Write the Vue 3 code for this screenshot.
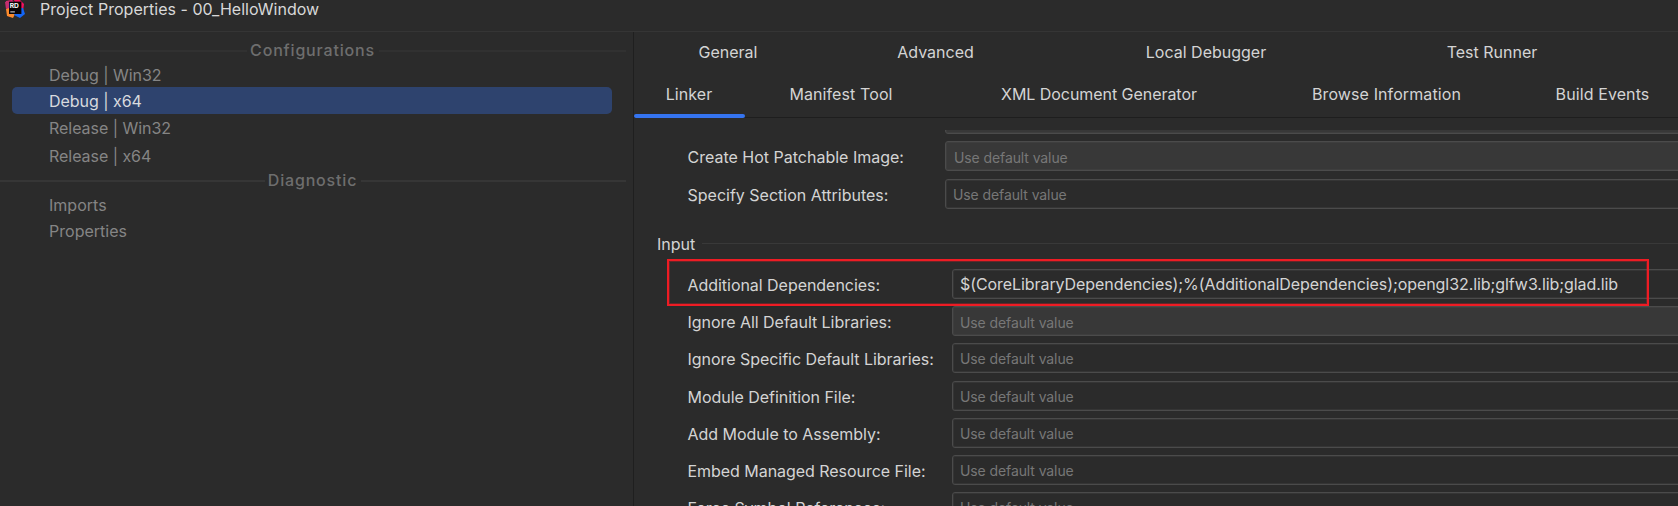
<script setup>
const configurations = [
  { name: 'Debug | Win32', cls: 'first' },
  { name: 'Debug | x64', cls: 'selected' },
  { name: 'Release | Win32', cls: '' },
  { name: 'Release | x64', cls: 'last' },
]
const diagnostics = ['Imports', 'Properties']
const upperTabs = [
  { name: 'General', width: 188 },
  { name: 'Advanced', width: 227 },
  { name: 'Local Debugger', width: 314 },
  { name: 'Test Runner', width: 258 },
]
const lowerTabs = [
  { name: 'Linker', width: 110, active: true },
  { name: 'Manifest Tool', width: 194 },
  { name: 'XML Document Generator', width: 322, tight: true },
  { name: 'Browse Information', width: 253 },
  { name: 'Build Events', width: 179 },
]
const hint = 'Use default value'
const general = [
  { label: '', text: '', combo: true },
  { label: 'Create Hot Patchable Image:', text: hint, combo: true },
  { label: 'Specify Section Attributes:', text: hint },
]
const input = [
  {
    label: 'Additional Dependencies:',
    text: '$(CoreLibraryDependencies);%(AdditionalDependencies);opengl32.lib;glfw3.lib;glad.lib',
    filled: true,
  },
  { label: 'Ignore All Default Libraries:', text: hint, combo: true },
  { label: 'Ignore Specific Default Libraries:', text: hint },
  { label: 'Module Definition File:', text: hint },
  { label: 'Add Module to Assembly:', text: hint },
  { label: 'Embed Managed Resource File:', text: hint },
  { label: 'Force Symbol References:', text: hint },
]
</script>

<template>
  <div class="window">
    <header class="titlebar">
      <svg class="logo" width="20" height="20" viewBox="0 0 20 20">
        <path d="M1 1 L7 0 L12 5 L8 17 L3 16 Z" fill="#f0287a" />
        <path d="M1 9 L6 7 L10 14 L8 18 L2 16 Z" fill="#fb8a2c" />
        <path d="M9 0 L15 0 L19 4 L18 11 L12 9 Z" fill="#f5125f" />
        <path d="M18 8 L20 14 L15 18 L9 15 L14 8 Z" fill="#1466f5" />
        <path d="M0 2 L4 1 L4 8 L1 9 Z" fill="#c22f6e" />
        <rect x="4" y="1.6" width="12.4" height="12.4" fill="#080408" />
        <text x="4.7" y="8.4" class="logo-text">RD</text>
        <rect x="5.3" y="11.4" width="4.6" height="1" fill="#ddd" />
      </svg>
      <span class="title">Project Properties - 00_HelloWindow</span>
    </header>
    <div class="body">
      <aside class="sidebar">
        <div class="section faint">Configurations</div>
        <ul class="list">
          <li v-for="c in configurations" :key="c.name" :class="c.cls">{{ c.name }}</li>
        </ul>
        <div class="section">Diagnostic</div>
        <ul class="list compact">
          <li v-for="d in diagnostics" :key="d">{{ d }}</li>
        </ul>
      </aside>
      <main class="content">
        <nav class="tabs">
          <div class="tab-row">
            <div v-for="t in upperTabs" :key="t.name" class="tab" :style="{ width: t.width + 'px' }">{{ t.name }}</div>
          </div>
          <div class="tab-row lower">
            <div v-for="t in lowerTabs" :key="t.name" class="tab" :class="{ active: t.active, tight: t.tight }" :style="{ width: t.width + 'px' }">{{ t.name }}</div>
          </div>
        </nav>
        <div class="scroll">
          <div class="rows general">
            <div v-for="r in general" :key="r.label" class="row">
              <label>{{ r.label }}</label>
              <div class="field" :class="{ combo: r.combo }">{{ r.text }}</div>
            </div>
          </div>
          <div class="group"><span>Input</span></div>
          <div class="rows">
            <div v-for="r in input" :key="r.label" class="row">
              <label>{{ r.label }}</label>
              <div class="field" :class="{ combo: r.combo, filled: r.filled }">{{ r.text }}</div>
            </div>
          </div>
        </div>
      </main>
    </div>
    <div class="marker"></div>
  </div>
</template>

<style>
body { background: #2b2b2b; }
</style>

<style scoped>
.window {
  position: relative;
  display: flex;
  flex-direction: column;
  width: 1678px;
  height: 506px;
  overflow: hidden;
  background: #2b2b2b;
  color: #d4d4d4;
  font: 16px/20px Inter, "Noto Sans", sans-serif;
  white-space: nowrap;
}
.titlebar {
  flex: none;
  box-sizing: border-box;
  height: 32px;
  display: flex;
  align-items: flex-start;
  border-bottom: 1px solid #353535;
}
.logo { flex: none; margin-left: 5px; }
.logo-text { font: 700 6.6px Inter, sans-serif; fill: #fff; }
.title { margin-left: 15px; line-height: 18px; letter-spacing: 0.03px; color: #d8d8d8; }
.body { flex: 1; min-height: 0; display: flex; }
.sidebar {
  box-sizing: border-box;
  flex: none;
  width: 634px;
  border-right: 1px solid #1f1f1f;
  padding: 7px 7px 0 0;
  color: #858585;
}
.section {
  display: flex;
  align-items: center;
  height: 22px;
  font-weight: 500;
  letter-spacing: 0.82px;
  color: #6e6e6e;
}
.section::before, .section::after {
  content: "";
  flex: 1;
  height: 2px;
  margin-top: 2px;
  background: #363636;
}
.section.faint::before, .section.faint::after { background: #313131; }
.section::before { margin-right: 3px; }
.section::after { margin-left: 4px; }
.list { list-style: none; margin: 0; padding: 0 14px 0 12px; letter-spacing: -0.04px; }
.list li {
  height: 27px;
  line-height: 29px;
  padding-left: 37px;
}
.list .first { height: 26px; line-height: 28px; }
.list .last { height: 28px; line-height: 30px; }
.list .selected { background: #2e436e; border-radius: 5px; color: #d8dade; }
.compact li { height: 26px; line-height: 28px; letter-spacing: 0.02px; }
.content { flex: 1; min-width: 0; display: flex; flex-direction: column; }
.tabs {
  position: relative;
  flex: none;
  box-sizing: border-box;
  height: 86px;
  border-bottom: 1px solid #1e1e1e;
}
.tab-row { display: flex; height: 41px; }
.tab {
  position: relative;
  flex: none;
  height: 41px;
  line-height: 41px;
  text-align: center;
}
.lower { letter-spacing: 0.1px; }
.lower .tab { line-height: 42px; }
.lower .tight { letter-spacing: -0.05px; }
.active::after {
  content: "";
  position: absolute;
  left: 0;
  bottom: -4px;
  width: 111px;
  height: 4px;
  border-radius: 2px;
  background: #3574f0;
}
.scroll { flex: 1; min-height: 0; margin-top: 12px; overflow: hidden; }
.rows { padding-left: 53.5px; }
.general { margin-top: -26px; }
.row { display: flex; height: 37.25px; }
.row label { flex: none; width: 264.5px; line-height: 33px; letter-spacing: -0.04px; }
.general label { width: 257.5px; line-height: 32px; letter-spacing: 0; }
.field {
  box-sizing: border-box;
  flex: none;
  width: 800px;
  height: 30px;
  border: 1px solid #4b4b4b;
  box-shadow: inset 0 0 0 1px #353535;
  border-radius: 3px;
  padding-left: 7px;
  font-size: 14px;
  line-height: 29px;
  letter-spacing: -0.1px;
  color: #777;
}
.field.combo { background: #383838; box-shadow: inset 0 0 0 1px #3e3e3e; line-height: 31px; }
.general .combo { padding-left: 8px; }
.field.filled { font-size: 16px; line-height: 28px; letter-spacing: -0.073px; color: #d4d4d4; }
.group {
  display: flex;
  align-items: center;
  height: 20px;
  margin: 18px 0 15px 23px;
}
.group::after {
  content: "";
  flex: 1;
  height: 1px;
  margin-left: 7px;
  background: #393939;
}
.marker {
  position: absolute;
  left: 667px;
  top: 259px;
  box-sizing: border-box;
  width: 982px;
  height: 47px;
  border: 2px solid #ee1c24;
  box-shadow: inset 0 0 0 1px rgba(238, 28, 36, 0.3);
}
</style>
